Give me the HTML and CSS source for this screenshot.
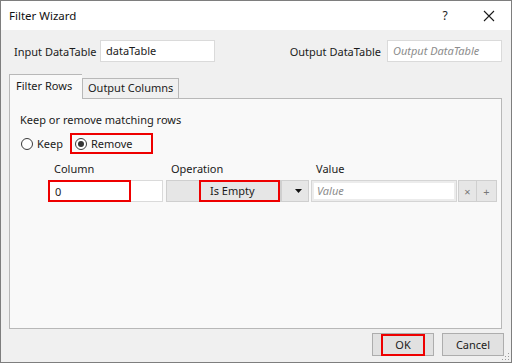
FILE: index.html
```html
<!DOCTYPE html>
<html>
<head>
<meta charset="utf-8">
<link rel="stylesheet" href="styles.css">
</head>
<body>
<div class="window">
  <div class="titlebar">
    <span class="title">Filter Wizard</span>
    <span class="tb-btn help">?</span>
    <span class="tb-btn close">
      <svg width="12" height="12" viewBox="0 0 12 12"><path d="M1 1 L11 11 M11 1 L1 11" stroke="#1a1a1a" stroke-width="1.1" fill="none"/></svg>
    </span>
  </div>
  <div class="content">
    <div class="io-row">
      <label class="lbl lbl-in">Input DataTable</label>
      <div class="field in-field">dataTable</div>
      <div class="spacer"></div>
      <label class="lbl lbl-out">Output DataTable</label>
      <div class="field out-field placeholder">Output DataTable</div>
    </div>
    <div class="tabs">
      <div class="tab active">Filter Rows</div>
      <div class="tab second">Output Columns</div>
    </div>
    <div class="panel">
      <div class="caption">Keep or remove matching rows</div>
      <div class="radio-row">
        <label class="radio keep"><span class="dot"></span>Keep</label>
        <label class="radio hl-remove"><span class="dot checked"></span>Remove</label>
      </div>
      <div class="grid">
        <div class="h h-col">Column</div>
        <div class="h h-op">Operation</div>
        <div class="h h-val">Value</div>
      </div>
      <div class="cond">
        <div class="col-input hl">0</div>
        <div class="col-extra"></div>
        <div class="op-btn"><span class="op-text hl">Is Empty</span></div>
        <div class="op-arrow"><svg width="7" height="4" viewBox="0 0 7 4"><path d="M0 0 H7 L3.5 4 Z" fill="#111"/></svg></div>
        <div class="val"><div class="val-inner placeholder">Value</div></div>
        <div class="mini">×</div>
        <div class="mini plus">+</div>
      </div>
    </div>
    <div class="footer">
      <div class="btn ok"><span class="ok-hl">OK</span></div>
      <div class="btn cancel">Cancel</div>
      <svg class="grip" width="8" height="8" viewBox="0 0 8 8">
        <rect x="6" y="0" width="1" height="1" fill="#9a9a9a"/>
        <rect x="3" y="3" width="1" height="1" fill="#9a9a9a"/>
        <rect x="6" y="3" width="1" height="1" fill="#9a9a9a"/>
        <rect x="0" y="6" width="1" height="1" fill="#9a9a9a"/>
        <rect x="3" y="6" width="1" height="1" fill="#9a9a9a"/>
        <rect x="6" y="6" width="1" height="1" fill="#9a9a9a"/>
      </svg>
    </div>
  </div>
</div>
</body>
</html>
```

FILE: styles.css
```css
* { box-sizing: border-box; }
html, body { margin: 0; padding: 0; }
body {
  width: 512px;
  height: 363px;
  font-family: "Noto Sans", "Open Sans", sans-serif;
  font-size: 11px;
  color: #1b1b1b;
  overflow: hidden;
}
.window {
  width: 512px;
  height: 363px;
  border: 1px solid #7e7e7e;
  background: #f0f0f0;
  display: flex;
  flex-direction: column;
}
.titlebar {
  height: 29px;
  background: #ffffff;
  display: flex;
  align-items: center;
  padding-left: 8px;
  flex-shrink: 0;
}
.title { flex: 1; font-size: 11.5px; color: #111; }
.tb-btn {
  width: 44px;
  height: 29px;
  display: flex;
  align-items: center;
  justify-content: center;
  font-size: 12px;
}
.help { color: #222; }
.content {
  flex: 1;
  position: relative;
  padding: 10px 8px 0 8px;
  display: flex;
  flex-direction: column;
}
.io-row {
  display: flex;
  align-items: center;
  height: 22px;
  padding-right: 1px;
}
.lbl { white-space: nowrap; }
.lbl-in { width: 91px; padding-left: 5px; }
.lbl-out { margin-right: 6px; }
.field {
  height: 22px;
  background: #fff;
  border: 1px solid #dadada;
  padding: 2px 5px;
  line-height: 16px;
  white-space: nowrap;
  overflow: hidden;
}
.in-field { width: 115px; }
.out-field { width: 115px; }
.spacer { flex: 1; }
.placeholder { color: #8c8c8c; font-style: italic; }
.tabs {
  display: flex;
  align-items: flex-end;
  margin-top: 12px;
  height: 24px;
  position: relative;
  z-index: 2;
}
.tab {
  height: 20px;
  border: 1px solid #b8b8b8;
  border-bottom: none;
  background: #f0f0f0;
  line-height: 18px;
  white-space: nowrap;
}
.tab.active {
  width: 73px;
  height: 25px;
  background: #f9f9f9;
  line-height: 22px;
  padding-left: 6px;
  border-right: none;
  margin-bottom: -1px;
}
.tab.second { width: 97px; padding-left: 5px; }
.panel {
  height: 231px;
  margin-right: 1px;
  background: #f9f9f9;
  border: 1px solid #b8b8b8;
  padding: 13px 4px 0 10px;
}
.caption { line-height: 16px; }
.radio-row {
  display: flex;
  align-items: center;
  margin-top: 5px;
  height: 21px;
}
.radio {
  display: flex;
  align-items: center;
  gap: 4px;
  height: 21px;
}
.keep { width: 50px; padding-left: 1px; }
.dot {
  width: 12px;
  height: 12px;
  border-radius: 50%;
  border: 1px solid #3a3a3a;
  background: #fff;
  display: inline-block;
  position: relative;
  flex-shrink: 0;
}
.dot.checked::after {
  content: "";
  position: absolute;
  left: 2px; top: 2px;
  width: 6px; height: 6px;
  border-radius: 50%;
  background: #333;
}
.hl-remove {
  width: 83px;
  border: 2px solid #ee0000;
  padding-left: 3px;
}
.grid {
  display: flex;
  margin-top: 7px;
  height: 16px;
  line-height: 16px;
}
.h-col { margin-left: 34px; width: 117px; }
.h-op { width: 145px; }
.cond {
  display: flex;
  margin-top: 3px;
  height: 22px;
  margin-left: 28px;
}
.cond > * { flex-shrink: 0; }
.hl { border: 2px solid #ee0000 !important; }
.col-input {
  width: 83px;
  height: 22px;
  background: #fff;
  padding: 1px 5px;
  line-height: 18px;
}
.col-extra {
  width: 32px;
  height: 22px;
  background: #fff;
  border: 1px solid #dadada;
  border-left: none;
}
.op-btn {
  margin-left: 3px;
  width: 115px;
  height: 22px;
  background: #e6e6e6;
  border: 1px solid #cfcfcf;
  display: flex;
  padding-left: 32px;
}
.op-text {
  width: 84px;
  height: 22px;
  margin-top: -1px;
  line-height: 18px;
  padding-left: 9px;
}
.op-arrow {
  width: 28px;
  height: 22px;
  background: #e6e6e6;
  border: 1px solid #cfcfcf;
  display: flex;
  align-items: center;
  justify-content: flex-end;
  padding-right: 6px;
}
.val {
  margin-left: 2px;
  width: 146px;
  height: 22px;
  background: #ececec;
  border: 1px solid #d5d5d5;
  padding: 2px;
}
.val-inner {
  background: #fff;
  height: 16px;
  line-height: 16px;
  padding-left: 3px;
}
.mini {
  margin-left: 1px;
  width: 19px;
  height: 22px;
  background: #e6e6e6;
  border: 1px solid #cfcfcf;
  color: #777;
  font-size: 11px;
  display: flex;
  align-items: center;
  justify-content: center;
}
.mini.plus { margin-left: 0; width: 20px; border-left: none; }
.footer {
  display: flex;
  justify-content: flex-end;
  align-items: center;
  height: 30px;
  gap: 8px;
  margin-right: -1px;
}
.btn {
  width: 62px;
  height: 23px;
  background: #e1e1e1;
  border: 1px solid #adadad;
  display: flex;
  align-items: center;
  justify-content: center;
  flex-shrink: 0;
}
.ok-hl {
  border: 2px solid #ee0000;
  width: 44px;
  height: 22px;
  margin-top: 1px;
  display: flex;
  align-items: center;
  justify-content: center;
}
.grip { position: absolute; right: 1px; bottom: 1px; }
```
